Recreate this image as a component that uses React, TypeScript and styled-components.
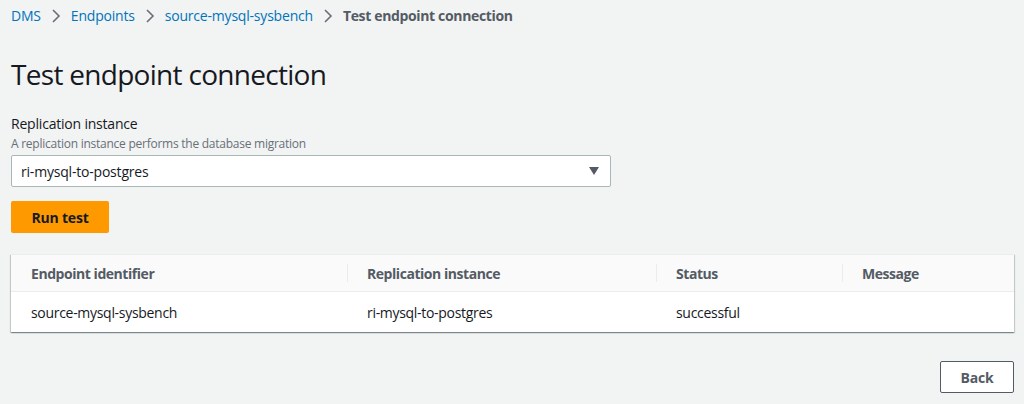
import React from "react";
import styled, { createGlobalStyle } from "styled-components";

const Global = createGlobalStyle`
  html, body { margin: 0; padding: 0; background: #f2f3f3; }
  body { font-family: "Open Sans", "Noto Sans", sans-serif; color: #16191f; letter-spacing: -0.2px; }
  * { box-sizing: border-box; }
`;

const Page = styled.div`
  width: 1024px;
  height: 404px;
  padding: 0 10px 0 11px;
  display: flex;
  flex-direction: column;
`;

const Crumbs = styled.nav`
  display: flex;
  align-items: center;
  height: 31px;
  font-size: 14px;
  gap: 9px;
`;

const CrumbLink = styled.a`
  color: #0073bb;
  text-decoration: none;
`;

const CrumbCurrent = styled.span`
  color: #545b64;
  font-weight: 700;
  letter-spacing: -0.35px;
`;

const Sep = styled.svg`
  width: 12px;
  height: 16px;
  color: #687078;
`;

const Title = styled.h1`
  margin: 25px 0 0;
  font-size: 28px;
  font-weight: 400;
  line-height: 36px;
  letter-spacing: -0.7px;
`;

const Label = styled.div`
  margin-top: 22px;
  font-size: 14px;
  line-height: 20px;
`;

const Desc = styled.div`
  margin-top: 2px;
  font-size: 12px;
  line-height: 16px;
  color: #687078;
  letter-spacing: -0.25px;
`;

const Select = styled.div`
  margin-top: 3px;
  width: 600px;
  height: 32px;
  background: #fff;
  border: 1px solid #aab7b8;
  border-radius: 2px;
  display: flex;
  align-items: center;
  justify-content: space-between;
  padding: 0 10px 0 9px;
  font-size: 14px;
`;

const Caret = styled.svg`
  width: 12px;
  height: 12px;
`;

const RunButton = styled.button`
  margin-top: 14px;
  width: 98px;
  height: 32px;
  background: #ff9900;
  border: none;
  border-radius: 2px;
  font-family: inherit;
  font-size: 14px;
  font-weight: 700;
  letter-spacing: -0.2px;
  color: #16191f;
  align-self: flex-start;
`;

const Table = styled.div`
  margin-top: 21px;
  width: 1003px;
  background: #fff;
  border-top: 1px solid #eaeded;
  box-shadow: 0 1px 1px 0 rgba(0, 28, 36, 0.3), 1px 1px 1px 0 rgba(0, 28, 36, 0.15),
    -1px 1px 1px 0 rgba(0, 28, 36, 0.15);
`;

const Row = styled.div<{ $head?: boolean }>`
  display: grid;
  grid-template-columns: 336px 309px 186px 1fr;
  height: ${(p) => (p.$head ? "37px" : "40px")};
  background: ${(p) => (p.$head ? "#fafafa" : "#fff")};
  border-bottom: ${(p) => (p.$head ? "1px solid #eaeded" : "none")};
  font-size: 14px;
  font-weight: ${(p) => (p.$head ? 700 : 400)};
  color: ${(p) => (p.$head ? "#545b64" : "#16191f")};
  letter-spacing: ${(p) => (p.$head ? "-0.45px" : "-0.3px")};
`;

const Cell = styled.div<{ $divider?: boolean }>`
  display: flex;
  align-items: center;
  padding-left: 20px;
  position: relative;
  ${(p) =>
    p.$divider
      ? `&::before { content: ""; position: absolute; left: 0; top: 9px; bottom: 9px; width: 1px; background: #eaeded; }`
      : ""}
`;

const Footer = styled.div`
  margin-top: 29px;
  display: flex;
  justify-content: flex-end;
`;

const BackButton = styled.button`
  width: 74px;
  height: 32px;
  background: #fff;
  border: 1px solid #545b64;
  border-radius: 2px;
  font-family: inherit;
  font-size: 14px;
  font-weight: 700;
  letter-spacing: -0.2px;
  color: #545b64;
`;

const Chevron = () => (
  <Sep viewBox="0 0 12 16">
    <path d="M3 2 L9 8 L3 14" fill="none" stroke="currentColor" strokeWidth="1.6" />
  </Sep>
);

export default function App() {
  const cols = ["Endpoint identifier", "Replication instance", "Status", "Message"];
  const vals = ["source-mysql-sysbench", "ri-mysql-to-postgres", "successful", ""];
  return (
    <>
      <Global />
      <Page>
        <Crumbs>
          <CrumbLink href="#">DMS</CrumbLink>
          <Chevron />
          <CrumbLink href="#">Endpoints</CrumbLink>
          <Chevron />
          <CrumbLink href="#">source-mysql-sysbench</CrumbLink>
          <Chevron />
          <CrumbCurrent>Test endpoint connection</CrumbCurrent>
        </Crumbs>
        <Title>Test endpoint connection</Title>
        <Label>Replication instance</Label>
        <Desc>A replication instance performs the database migration</Desc>
        <Select>
          <span>ri-mysql-to-postgres</span>
          <Caret viewBox="0 0 12 12">
            <path d="M1 2 H11 L6 10 Z" fill="#545b64" />
          </Caret>
        </Select>
        <RunButton>Run test</RunButton>
        <Table>
          <Row $head>
            {cols.map((c, i) => (
              <Cell key={c} $divider={i > 0}>
                {c}
              </Cell>
            ))}
          </Row>
          <Row>
            {vals.map((v, i) => (
              <Cell key={i}>{v}</Cell>
            ))}
          </Row>
        </Table>
        <Footer>
          <BackButton>Back</BackButton>
        </Footer>
      </Page>
    </>
  );
}
